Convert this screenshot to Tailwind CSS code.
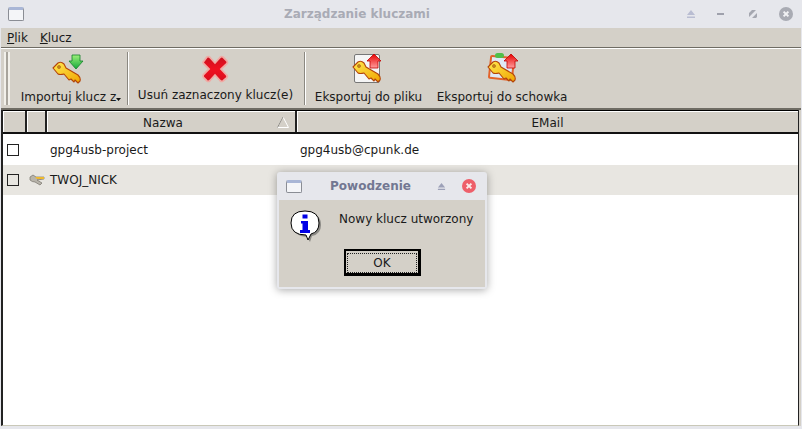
<!DOCTYPE html>
<html lang="pl">
<head>
  <meta charset="UTF-8" />
  <title>Zarządzanie kluczami</title>
  <script src="https://cdn.jsdelivr.net/npm/@tailwindcss/browser@4"></script>
</head>
<body class="relative w-[802px] h-[429px] overflow-hidden bg-[#e6e7ec] text-[12px] leading-[15px] text-[#1a1a1a] font-['DejaVu_Sans',sans-serif]">
  <svg class="absolute w-0 h-0">
    <defs>
      <linearGradient id="gold" x1="0" y1="0" x2="1" y2="1">
        <stop offset="0" stop-color="#ffe94f" />
        <stop offset="1" stop-color="#f0a400" />
      </linearGradient>
      <linearGradient id="green" x1="0" y1="0" x2="0" y2="1">
        <stop offset="0" stop-color="#9df07a" />
        <stop offset="1" stop-color="#14a83a" />
      </linearGradient>
      <linearGradient id="red" x1="0" y1="0" x2="0" y2="1">
        <stop offset="0" stop-color="#e80000" />
        <stop offset="1" stop-color="#ff9d9d" />
      </linearGradient>
      <linearGradient id="cross" x1="0" y1="0" x2="0" y2="1">
        <stop offset="0" stop-color="#c9101e" />
        <stop offset=".5" stop-color="#f01020" />
        <stop offset="1" stop-color="#d80c1c" />
      </linearGradient>
      <symbol id="key" viewBox="0 0 30 24">
        <path d="M1 7 L6 2 Q9 0 12 3 L14 7 L26 14 Q29 17 28 20 L26 22 L23 19 L22 21 L19 18 L17 19 L12 13 Q8 14 6 13 Z" fill="url(#gold)" stroke="#b3440a" stroke-width="1.1" stroke-linejoin="round" />
        <circle cx="7" cy="6" r="1.5" fill="#c98a20" stroke="#a3560a" stroke-width=".6" />
      </symbol>
      <symbol id="arrow-up" viewBox="0 0 16 16">
        <path d="M8 1 L15 8 L12 8 L12 15 L4 15 L4 8 L1 8 Z" fill="url(#red)" stroke="#c00000" stroke-width=".8" />
      </symbol>
    </defs>
  </svg>

  <!-- Main title bar -->
  <div class="flex items-center h-[28px] pl-[8px] pr-[9px]">
    <span class="w-[16px] h-[14px] border border-[#8a8d94] rounded-[2px] bg-[#f4f5f8] border-t-[3px] border-t-[#a9b6d6]"></span>
    <span class="flex-1 text-center font-bold text-[#a9abb5] pl-[4px]">Zarządzanie kluczami</span>
    <div class="flex items-center">
      <svg class="w-[10px] h-[10px]" viewBox="0 0 10 10"><path d="M5 1 L9 6 L1 6 Z M1 7.5 H9 V9 H1 Z" fill="#b9bdd2" /></svg>
      <svg class="w-[8px] h-[4px] ml-[21px]" viewBox="0 0 8 4"><rect y="1" width="7" height="2" fill="#9fa1ac" /></svg>
      <svg class="w-[8px] h-[8px] ml-[24px]" viewBox="0 0 8 8"><path d="M0 3 L3 0 H7 L0 7 Z M8 3 V7 L7 8 H3 Z" fill="#a5a7b0" /></svg>
      <svg class="w-[14px] h-[14px] ml-[22px]" viewBox="0 0 14 14"><circle cx="7" cy="7" r="7" fill="#a9abb3" /><path d="M4.6 4.6 L9.4 9.4 M9.4 4.6 L4.6 9.4" stroke="#f2f2f4" stroke-width="2" /></svg>
    </div>
  </div>

  <div class="mx-[1px] bg-[#d4d0c8] h-[398px] flex flex-col">
    <!-- Menu -->
    <div class="flex h-[19px] items-center gap-[12px] pl-[6px] pt-[2px] shrink-0">
      <span><span class="underline">P</span>lik</span>
      <span><span class="underline">K</span>lucz</span>
    </div>
    <div class="h-[1px] bg-[#6f6c64] shrink-0"></div>
    <div class="h-[1px] bg-white shrink-0"></div>

    <!-- Toolbar -->
    <div class="flex h-[59px] pt-[3px] pb-[3px] pl-[3px] shrink-0">
      <div class="w-[6px] border-x-2 border-x-[#f2f0ea] bg-[#a8a49c] mr-[8px]"></div>
      <button class="relative w-[109px] flex flex-col items-center">
        <span class="relative block w-[32px] h-[32px] mt-[1px] -ml-[9px]">
          <svg class="absolute left-0 top-[8px] w-[30px] h-[24px]"><use href="#key" /></svg>
          <svg class="absolute left-[16px] top-[1px] w-[16px] h-[16px]" viewBox="0 0 16 16"><path d="M4 1 H12 V7 H15 L8 15 L1 7 H4 Z" fill="url(#green)" stroke="#12822a" stroke-width=".8" /></svg>
        </span>
        <span class="mt-[5px] -ml-[8px] whitespace-nowrap">Importuj klucz z</span>
        <svg class="absolute right-[6px] bottom-[4px] w-[5px] h-[3px]" viewBox="0 0 5 3"><path d="M0 0 H5 L2.500 3 Z" fill="#111" /></svg>
      </button>
      <div class="w-[1px] bg-[#8b8881] border-r border-white box-content"></div>
      <button class="w-[174px] flex flex-col items-center">
        <svg class="w-[30px] h-[30px] mt-[2px] -ml-[3px]" viewBox="0 0 30 30"><path d="M4 7 L7 3 Q8.5 2 10 3.500 L15 9 L20 3.500 Q21.500 2 23 3 L27 7 Q28 8.500 26.500 10 L21 15 L26.500 21 Q28 22.500 26.500 24 L23 27 Q21.500 28 20 26.500 L15 21 L10 26.500 Q8.500 28 7 27 L3.500 23.500 Q2.500 22 3.500 20.500 L9 15 L3.500 9.500 Q2.500 8 4 7 Z" fill="url(#cross)" stroke="#f0aaa4" stroke-width="1.800" /></svg>
        <span class="mt-[4px] -ml-[1px] whitespace-nowrap">Usuń zaznaczony klucz(e)</span>
      </button>
      <div class="w-[1px] bg-[#8b8881] border-r border-white box-content ml-[1px]"></div>
      <button class="w-[124px] flex flex-col items-center">
        <span class="relative block w-[32px] h-[32px] mt-[1px]">
          <span class="absolute left-[2px] top-[1px] w-[26px] h-[29px] rounded-[2px] bg-[#f5f5f5] border border-[#777]"></span>
          <svg class="absolute left-0 top-[7px] w-[30px] h-[24px]"><use href="#key" /></svg>
          <svg class="absolute left-[14px] top-[0px] w-[16px] h-[16px]"><use href="#arrow-up" /></svg>
        </span>
        <span class="mt-[5px] ml-[1px] whitespace-nowrap">Eksportuj do pliku</span>
      </button>
      <button class="w-[142px] flex flex-col items-center">
        <span class="relative block w-[32px] h-[32px] mt-[1px] ml-[4px]">
          <span class="absolute left-[2px] top-[3px] w-[25px] h-[24px] rotate-6 rounded-[2px] bg-[#dfe8f5] border-2 border-[#e3622a]"></span>
          <span class="absolute left-[8px] top-0 w-[9px] h-[5px] rounded-full bg-[#4fbf4a]"></span>
          <svg class="absolute left-0 top-[7px] w-[30px] h-[24px]"><use href="#key" /></svg>
          <svg class="absolute left-[16px] top-[0px] w-[16px] h-[16px]"><use href="#arrow-up" /></svg>
        </span>
        <span class="mt-[5px] ml-[2px] whitespace-nowrap">Eksportuj do schowka</span>
      </button>
    </div>
    <div class="h-[2px] bg-[#6f6c64] shrink-0"></div>

    <!-- Key table -->
    <div class="flex-1 flex flex-col mr-[2px] bg-white border-l-2 border-l-[#222] border-r border-r-[#222] border-b border-b-[#c9c8b8]">
      <div class="flex h-[24px] shrink-0 border-t border-t-black border-b-2 border-b-[#111] bg-[#d4d0c8] text-center">
        <div class="w-[24px] border-r-2 border-r-[#222] shadow-[inset_1px_1px_0_#fff]"></div>
        <div class="w-[20px] border-r-2 border-r-[#222] shadow-[inset_1px_1px_0_#fff]"></div>
        <div class="relative w-[250px] border-r-2 border-r-[#222] pt-[5px] pr-[16px] shadow-[inset_1px_1px_0_#fff]">Nazwa
          <svg class="absolute right-[6px] top-[5px] w-[12px] h-[12px]" viewBox="0 0 12 12"><path d="M6 1 L11.500 11.500 H.5 Z" fill="none" stroke="#fff" /><path d="M6 1 L.5 11.500" stroke="#8b8881" /></svg>
        </div>
        <div class="flex-1 pt-[5px] shadow-[inset_1px_1px_0_#fff]">EMail</div>
      </div>
      <div class="flex items-center h-[31px] pt-[1px] bg-white">
        <span class="w-[12px] h-[12px] ml-[4px] border border-[#222]"></span>
        <span class="ml-[31px] w-[250px]">gpg4usb-project</span>
        <span>gpg4usb@cpunk.de</span>
      </div>
      <div class="flex items-center h-[30px] bg-[#e8e6e1]">
        <span class="w-[12px] h-[12px] ml-[4px] border border-[#222]"></span>
        <svg class="w-[16px] h-[12px] ml-[10px]" viewBox="0 0 16 12"><path d="M1 3 L4 1 L7 3 L15 3 V5 L8 6 L13 9 L11 11 L6 8 Q3 8 1 6 Z" fill="#b8b4aa" stroke="#77736a" stroke-width=".7" /><path d="M6 3 H15 V5 H8 Z" fill="#eeb92e" /></svg>
        <span class="ml-[5px]">TWOJ_NICK</span>
      </div>
    </div>
  </div>

  <!-- Success dialog -->
  <div class="absolute left-[277px] top-[172px] w-[210px] h-[117px] rounded-[3px] bg-[#e6e7ec] shadow-[0_1px_8px_rgba(0,0,0,0.35)] px-[2px] pb-[2px] flex flex-col">
    <div class="flex items-center h-[28px] shrink-0 pl-[7px] pr-[9px]">
      <span class="w-[16px] h-[13px] border border-[#8a8d94] rounded-[2px] bg-[#f4f5f8] border-t-[3px] border-t-[#a9b6d6]"></span>
      <span class="flex-1 text-center font-bold text-[#727792] pl-[2px]">Powodzenie</span>
      <svg class="w-[9px] h-[9px] mr-[16px]" viewBox="0 0 10 10"><path d="M5 1 L9 6 L1 6 Z M1 7.500 H9 V9 H1 Z" fill="#9da1b8" /></svg>
      <svg class="w-[14px] h-[14px]" viewBox="0 0 14 14"><circle cx="7" cy="7" r="7" fill="#ee5f6a" /><path d="M4.600 4.600 L9.400 9.400 M9.400 4.600 L4.600 9.400" stroke="#fbeaea" stroke-width="2" /></svg>
    </div>
    <div class="flex-1 bg-[#d4d0c8] flex flex-col">
      <div class="flex h-[46px]">
        <svg class="w-[32px] h-[32px] ml-[11px] mt-[10px]" viewBox="0 0 32 32">
          <path d="M17 3 Q31 3 31 15 Q31 24 22 26 L20 32 L17 27 Q3 26 3 15 Q3 3 17 3 Z" fill="#8c8a85" />
          <path d="M15 1 Q29 1 29 13 Q29 22 21 24 L18 30 L16 25 Q1 25 1 13 Q1 1 15 1 Z" fill="#fff" stroke="#000" />
          <rect x="12.500" y="4.500" width="5" height="4" fill="#0000e6" />
          <path d="M11 11 H18 V20 H20 V23 H10 V20 H12.500 V13.500 H11 Z" fill="#0000e6" />
        </svg>
        <span class="ml-[17px] mt-[12px] whitespace-nowrap">Nowy klucz utworzony</span>
      </div>
      <button class="mt-[3px] ml-[65px] w-[77px] h-[27px] px-[1px] pt-[2px] pb-0 border-2 border-black border-r-[3px] border-b-[3px] bg-[#d4d0c8]">
        <span class="flex items-center justify-center h-full border border-dotted border-[#222]">OK</span>
      </button>
    </div>
  </div>
</body>
</html>
